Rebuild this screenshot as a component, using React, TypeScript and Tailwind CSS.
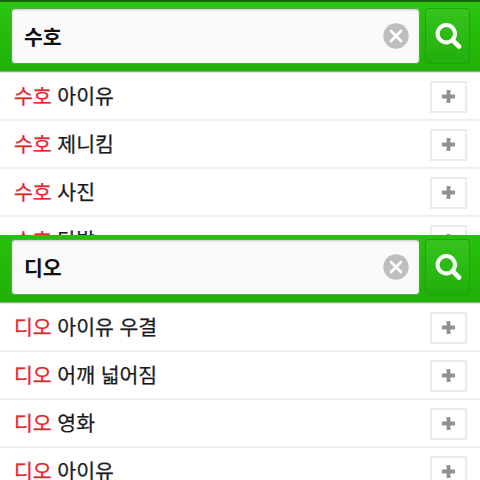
import React from "react";

type SearchPanelProps = {
  query: string;
  suggestions: string[];
  first?: boolean;
};

const SearchIcon: React.FC = () => (
  <svg width="28" height="28" viewBox="0 0 28 28" fill="none" stroke="#fff" strokeLinecap="round">
    <circle cx="12.3" cy="11.8" r="8.7" strokeWidth="4" />
    <path d="M19 18.5L25 24.5" strokeWidth="4.6" />
  </svg>
);

const ClearIcon: React.FC = () => (
  <svg width="26" height="26" viewBox="0 0 26 26">
    <circle cx="13" cy="13" r="12.7" fill="#bebebe" />
    <path d="M8 8L18 18M18 8L8 18" stroke="#fff" strokeWidth="2.6" strokeLinecap="round" />
  </svg>
);

const PlusIcon: React.FC = () => (
  <svg width="13" height="13" viewBox="0 0 13 13" stroke="#929292" strokeWidth="3.8">
    <path d="M6.5 0V13M0 6.5H13" />
  </svg>
);

const SearchPanel: React.FC<SearchPanelProps> = ({ query, suggestions, first }) => (
  <section className={first ? "h-[235px] overflow-hidden" : "h-[245px] overflow-hidden"}>
    <header
      className={
        first
          ? "h-[72px] border-t-2 border-t-[#14650a] border-b border-b-[#8fae8b] bg-gradient-to-b from-[#2bc50f] to-[#20b008] pt-[6px] pl-[11px] flex gap-[5px]"
          : "h-[68px] border-b border-b-[#8fae8b] bg-gradient-to-b from-[#28c00c] to-[#20b008] pt-1 pl-[11px] flex gap-[5px]"
      }
    >
      <div className="flex h-[56px] w-[409px] items-center justify-between rounded-[4px] border border-[#55a94b] bg-[#fafafa] pr-[10px] pl-3 shadow-[inset_0_1px_2px_#c8c8c8]">
        <span className="text-[20.5px] leading-none font-bold text-[#111]">{query}</span>
        <ClearIcon />
      </div>
      <button className="flex h-[56px] w-[45px] items-center justify-center rounded-[4px] border border-[#1fa20c] bg-gradient-to-b from-[#35c51c] to-[#22ae0a]">
        <SearchIcon />
      </button>
    </header>

    <ul className="border-t border-[#e3e7e2]">
      {suggestions.map((suggestion) => (
        <li
          key={suggestion}
          className="flex h-12 items-center justify-between border-b-2 border-[#efefef] pt-px pr-[13px] pl-[14px]"
        >
          <p className="-mt-[2px] text-[20.5px] leading-none [word-spacing:1px] whitespace-pre text-[#1b1b1b] [-webkit-text-stroke:0.25px]">
            <span className="text-[#e3262a]">{query}</span> {suggestion}
          </p>
          <button className="flex h-8 w-[37px] items-center justify-center border-2 border-[#ebebeb] bg-white">
            <PlusIcon />
          </button>
        </li>
      ))}
    </ul>
  </section>
);

const App: React.FC = () => {
  return (
    <main className="h-[480px] w-[480px] overflow-hidden bg-white font-['Noto_Sans_CJK_KR',sans-serif]">
      <SearchPanel first query="수호" suggestions={["아이유", "제니킴", "사진", "단발"]} />
      <SearchPanel query="디오" suggestions={["아이유 우결", "어깨 넓어짐", "영화", "아이유"]} />
    </main>
  );
};

export default App;
